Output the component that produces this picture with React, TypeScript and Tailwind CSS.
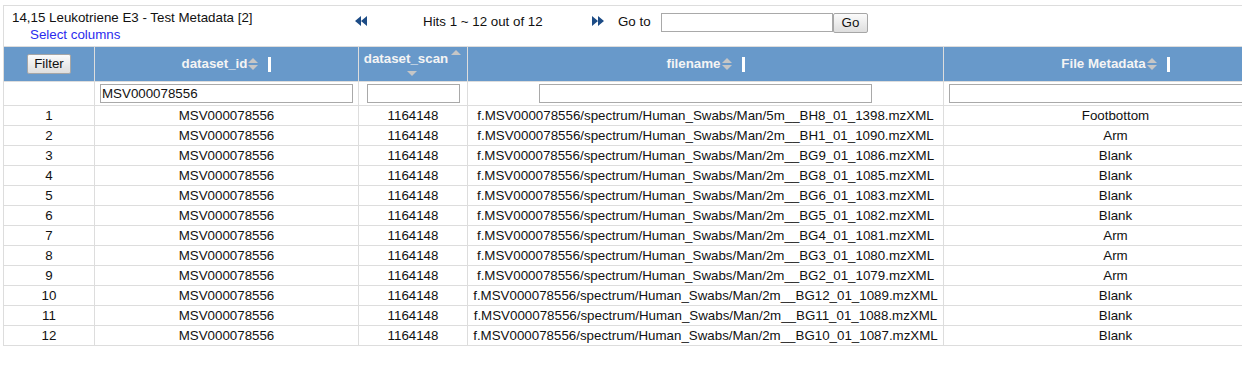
const rows = [
  ['5m__BH8_01_1398', 'Footbottom'],
  ['2m__BH1_01_1090', 'Arm'],
  ['2m__BG9_01_1086', 'Blank'],
  ['2m__BG8_01_1085', 'Blank'],
  ['2m__BG6_01_1083', 'Blank'],
  ['2m__BG5_01_1082', 'Blank'],
  ['2m__BG4_01_1081', 'Arm'],
  ['2m__BG3_01_1080', 'Arm'],
  ['2m__BG2_01_1079', 'Arm'],
  ['2m__BG12_01_1089', 'Blank'],
  ['2m__BG11_01_1088', 'Blank'],
  ['2m__BG10_01_1087', 'Blank'],
]

function SortIcon() {
  return (
    <svg width="12" height="14" viewBox="0 0 12 14" className="inline-block align-middle">
      <path d="M1 6L6 1L11 6Z" fill="#c6c6c6" />
      <path d="M1 8L11 8L6 13Z" fill="#c6c6c6" />
    </svg>
  )
}

function Handle() {
  return <span className="inline-block w-[3px] h-[15px] bg-white align-middle ml-[9px]" />
}

function DoubleArrow({ dir }: { dir: 'left' | 'right' }) {
  return (
    <svg width="12" height="10" viewBox="0 0 12 10" className="block">
      {dir === 'left' ? (
        <path d="M6 0L0 5L6 10ZM12 0L6 5L12 10Z" fill="#1d4c86" />
      ) : (
        <path d="M0 0L6 5L0 10ZM6 0L12 5L6 10Z" fill="#1d4c86" />
      )}
    </svg>
  )
}

const btn = "h-[20px] border border-[#a6a6a6] rounded-[2px] bg-gradient-to-b from-[#fbfbfb] to-[#dedede] text-[13.33px] text-[#111] leading-none"
const cell = "border border-[#dddddd] text-center p-0"

export default function App() {
  return (
    <div className="w-[1242px] h-[382px] overflow-hidden bg-white pt-[5px] pl-[3px] font-['Liberation_Sans',Arial,sans-serif] text-[13.33px] text-[#111]">
      <div className="w-[1284px] h-[42px] border-t border-l border-[#dddddd] flex">
        <div className="w-[351px] pl-[8px] pt-[4px]">
          <div className="leading-[15px] whitespace-nowrap">14,15 Leukotriene E3 - Test Metadata [2]</div>
          <div className="leading-[16px] mt-[2px] pl-[18px] text-[#2b2bee] whitespace-nowrap">Select columns</div>
        </div>
        <div className="flex items-start pt-[7px]">
          <div className="pt-[3px]"><DoubleArrow dir="left" /></div>
          <span className="ml-[56px] w-[169px] leading-[15px] pt-[1px] whitespace-nowrap">Hits 1 ~ 12 out of 12</span>
          <div className="pt-[3px]"><DoubleArrow dir="right" /></div>
          <span className="ml-[14px] w-[43px] leading-[15px] pt-[1px] whitespace-nowrap">Go to</span>
          <input className="w-[172px] h-[19px] border border-[#a9a9a9] outline-none" />
          <button className={`${btn} w-[35px]`}>Go</button>
        </div>
      </div>
      <table className="border-collapse table-fixed w-[1284px] -mt-[1px]">
        <colgroup>
          <col className="w-[91px]" />
          <col className="w-[264px]" />
          <col className="w-[109px]" />
          <col className="w-[476px]" />
          <col className="w-[344px]" />
        </colgroup>
        <thead>
          <tr className="h-[35px] bg-[#6899ca] text-[#f4f4f4] font-bold">
            <th className={cell}>
              <button className={`${btn} w-[44px] font-normal`}>Filter</button>
            </th>
            <th className={cell}>
              <span className="align-middle">dataset_id</span><SortIcon /><Handle />
            </th>
            <th className={`${cell} leading-[15px]`}>
              <div className="flex items-start justify-center -mt-[1px]">
                <span>dataset_scan</span>
                <svg width="12" height="7" viewBox="0 0 12 7" className="ml-[2px] -mt-[2px]"><path d="M1 6L6 1L11 6Z" fill="#c6c6c6" /></svg>
              </div>
              <div className="flex justify-center mt-[4px] pr-[2px]">
                <svg width="12" height="7" viewBox="0 0 12 7"><path d="M1 1L11 1L6 6Z" fill="#c6c6c6" /></svg>
              </div>
            </th>
            <th className={cell}>
              <span className="align-middle">filename</span><SortIcon /><Handle />
            </th>
            <th className={cell}>
              <span className="align-middle">File Metadata</span><SortIcon /><Handle />
            </th>
          </tr>
        </thead>
        <tbody>
          <tr className="h-[24px]">
            <td className={cell}></td>
            <td className={cell}>
              <input defaultValue="MSV000078556" className="w-[253px] h-[19px] border border-[#a9a9a9] px-[1px] text-[13.33px] text-[#111] outline-none block ml-[5px]" />
            </td>
            <td className={cell}>
              <input className="w-[93px] h-[19px] border border-[#a9a9a9] outline-none block ml-[8px]" />
            </td>
            <td className={cell}>
              <input className="w-[333px] h-[19px] border border-[#a9a9a9] outline-none block ml-[71px]" />
            </td>
            <td className={cell}>
              <input className="w-[333px] h-[19px] border border-[#a9a9a9] outline-none block ml-[5px]" />
            </td>
          </tr>
          {rows.map(([file, meta], i) => (
            <tr key={i} className="h-[20px] leading-[15px]">
              <td className={cell}>{i + 1}</td>
              <td className={cell}>MSV000078556</td>
              <td className={cell}>1164148</td>
              <td className={`${cell} whitespace-nowrap`}>f.MSV000078556/spectrum/Human_Swabs/Man/{file}.mzXML</td>
              <td className={cell}>{meta}</td>
            </tr>
          ))}
        </tbody>
      </table>
    </div>
  )
}
